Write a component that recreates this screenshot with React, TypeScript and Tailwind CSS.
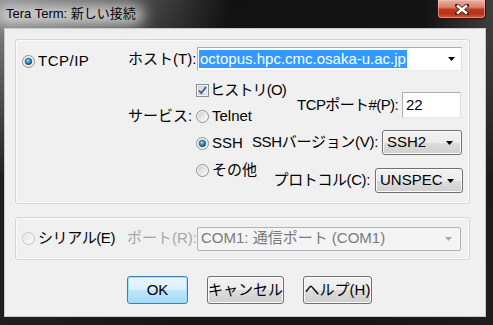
import React from "react"

const font = "font-['Liberation_Sans','Noto_Sans_CJK_JP',sans-serif]"

function Radio({ checked = false, disabled = false }: { checked?: boolean; disabled?: boolean }) {
  return (
    <svg width="13" height="13" viewBox="0 0 13 13" className="shrink-0">
      <defs>
        <linearGradient id="rbg" x1="0" y1="0" x2="1" y2="1">
          <stop offset="0" stopColor="#cfcfcf" />
          <stop offset="1" stopColor="#fbfbfb" />
        </linearGradient>
        <linearGradient id="rbgd" x1="0" y1="0" x2="1" y2="1">
          <stop offset="0" stopColor="#e2e2e2" />
          <stop offset="1" stopColor="#fbfbfb" />
        </linearGradient>
        <radialGradient id="rdot" cx="0.4" cy="0.35" r="0.7">
          <stop offset="0" stopColor="#8fdcff" />
          <stop offset="0.5" stopColor="#2f8fd0" />
          <stop offset="1" stopColor="#123d66" />
        </radialGradient>
      </defs>
      <circle cx="6.5" cy="6.5" r="6" fill="#f4f4f4" stroke={disabled ? "#c2c2c2" : "#8e8f8f"} />
      <circle cx="6.5" cy="6.5" r="4.5" fill={disabled ? "url(#rbgd)" : "url(#rbg)"} />
      {checked && <circle cx="6.5" cy="6.5" r="3.3" fill="url(#rdot)" stroke="#1b4468" strokeWidth="0.6" />}
    </svg>
  )
}

function Check() {
  return (
    <svg width="13" height="13" viewBox="0 0 13 13" className="shrink-0">
      <defs>
        <linearGradient id="cbg" x1="0" y1="0" x2="1" y2="1">
          <stop offset="0" stopColor="#d4d4d4" />
          <stop offset="1" stopColor="#fafafa" />
        </linearGradient>
      </defs>
      <rect x="0.5" y="0.5" width="12" height="12" fill="#f4f4f4" stroke="#8e8f8f" />
      <rect x="2.5" y="2.5" width="8" height="8" fill="url(#cbg)" stroke="#c0c0c0" strokeWidth="0.6" />
      <path d="M3 6.5 L5.3 9 L10 3" fill="none" stroke="#3c55a0" strokeWidth="1.8" />
    </svg>
  )
}

function Arrow({ color = "#000" }: { color?: string }) {
  return (
    <svg width="7" height="4" viewBox="0 0 7 4" className="shrink-0">
      <path d="M0 0 H7 L3.5 4 Z" fill={color} />
    </svg>
  )
}

function Select({ value, className }: { value: string; className: string }) {
  return (
    <div
      className={`flex items-center justify-between rounded-[3px] border border-[#707070] bg-[linear-gradient(#f2f2f2_0%,#ebebeb_50%,#dddddd_51%,#cfcfcf_100%)] pl-[4px] pr-[8px] text-[15px] text-black shadow-[inset_0_0_0_1px_#fcfcfc] ${className}`}
    >
      <span>{value}</span>
      <Arrow />
    </div>
  )
}

function Button({ label, primary = false, className }: { label: string; primary?: boolean; className: string }) {
  return (
    <div
      className={`flex h-[28px] items-center justify-center rounded-[3px] border text-[15px] text-black ${
        primary
          ? "border-[#3c7fb1] bg-[linear-gradient(#eaf6fd_0%,#d9f0fc_50%,#bee6fd_51%,#a7d9f5_100%)] shadow-[inset_0_0_0_1px_#9fe0fb]"
          : "border-[#707070] bg-[linear-gradient(#f2f2f2_0%,#ebebeb_50%,#dddddd_51%,#cfcfcf_100%)] shadow-[inset_0_0_0_1px_#fcfcfc]"
      } ${className}`}
    >
      {label}
    </div>
  )
}

export default function App() {
  return (
    <div
      className={`relative flex h-[325px] w-[493px] flex-col overflow-hidden bg-[linear-gradient(180deg,rgba(22,22,22,0)_0%,rgba(22,22,22,0.92)_55%),linear-gradient(100deg,#8e8e8e_0%,#5a5a5a_22%,#121212_42%,#141414_78%,#4a4a4a_92%,#6a6a6a_100%)] ${font}`}
    >
      {/* title bar */}
      <div className="relative flex h-[28px] shrink-0 items-start">
        <div className="absolute left-[-4px] top-[5px] h-[20px] w-[148px] rounded-full bg-[#dedede] opacity-85 blur-[7px]" />
        <span className="relative pl-[6px] pt-[6px] text-[13px] leading-[16px] text-black">Tera Term: 新しい接続</span>
        <div className="ml-auto mr-[7px] flex h-[19px] w-[49px] items-center justify-center rounded-b-[4px] border border-t-0 border-[#3d0d06] bg-[linear-gradient(#eab0a2_0%,#d9806b_40%,#c0391f_52%,#b53219_75%,#d05a3e_100%)] shadow-[inset_0_0_0_1px_rgba(255,200,190,0.5)]">
          <svg width="14" height="11" viewBox="0 0 14 11">
            <path d="M2 1.5 L12 9.5 M12 1.5 L2 9.5" stroke="#4a1a12" strokeWidth="4" strokeLinecap="square" />
            <path d="M2 1.5 L12 9.5 M12 1.5 L2 9.5" stroke="#ffffff" strokeWidth="2.4" />
          </svg>
        </div>
      </div>

      {/* client area */}
      <div className="ml-[4px] h-[289px] w-[482px] border border-[#c9c9c9] bg-[#f0f0f0]">
        {/* TCP/IP group */}
        <div className="ml-[10px] mt-[10px] flex h-[165px] w-[455px] rounded-[3px] border border-[#d5d5d5] shadow-[inset_0_0_0_1px_#fbfbfb]">
          <div className="w-[112px] shrink-0 pl-[6px] pt-[12px]">
            <div className="flex h-[18px] items-center gap-[3px] text-[15px]">
              <Radio checked />
              <span className="tracking-[0.5px]">TCP/IP</span>
            </div>
          </div>

          <div className="flex w-[335px] flex-col pt-[7px]">
            <div className="flex h-[24px] items-center">
              <span className="w-[69px] text-[15px]">ホスト(T):</span>
              <div className="flex h-[24px] w-[265px] items-center justify-between border border-[#abadb3] border-b-[#e3e9ef] border-r-[#dbdfe6] bg-white pl-[1px] pr-[6px]">
                <span className="bg-[#3399ff] px-[1px] text-[15px] leading-[18px] text-white">octopus.hpc.cmc.osaka-u.ac.jp</span>
                <Arrow />
              </div>
            </div>

            <div className="flex items-start">
              <div className="flex w-[110px] shrink-0 flex-col">
                <div className="ml-[68px] mt-[10px] flex h-[18px] items-center gap-[1px] whitespace-nowrap text-[15px]">
                  <Check />
                  <span className="tracking-[-0.8px]">ヒストリ(O)</span>
                </div>
                <div className="mt-[4px] flex">
                  <span className="flex h-[27px] w-[68px] shrink-0 items-center text-[15px]">サービス:</span>
                  <div className="flex flex-col">
                    <div className="flex h-[27px] items-center gap-[3px] text-[15px]">
                      <Radio />
                      <span>Telnet</span>
                    </div>
                    <div className="flex h-[27px] items-center gap-[3px] text-[15px]">
                      <Radio checked />
                      <span>SSH</span>
                    </div>
                    <div className="flex h-[27px] items-center gap-[3px] whitespace-nowrap text-[15px]">
                      <Radio />
                      <span>その他</span>
                    </div>
                  </div>
                </div>
              </div>

              <div className="ml-auto mt-[21px] flex flex-col items-end">
                <div className="mr-[2px] flex h-[26px] items-center gap-[4px] text-[15px]">
                  <span className="whitespace-nowrap tracking-[-0.6px]">TCPポート#(P):</span>
                  <div className="flex h-[26px] w-[59px] items-center border border-[#abadb3] border-b-[#e3e9ef] border-r-[#dbdfe6] bg-white pl-[3px]">
                    22
                  </div>
                </div>
                <div className="mr-[1px] mt-[12px] flex items-center gap-[4px] text-[15px]">
                  <span className="whitespace-nowrap tracking-[-0.3px]">SSHバージョン(V):</span>
                  <Select value="SSH2" className="h-[25px] w-[80px]" />
                </div>
                <div className="mt-[13px] flex items-center gap-[5px] text-[15px]">
                  <span className="whitespace-nowrap tracking-[-0.4px]">プロトコル(C):</span>
                  <Select value="UNSPEC" className="h-[25px] w-[88px]" />
                </div>
              </div>
            </div>
          </div>
        </div>

        {/* serial group */}
        <div className="ml-[10px] mt-[13px] flex h-[43px] w-[455px] items-center rounded-[3px] border border-[#d5d5d5] text-[15px] shadow-[inset_0_0_0_1px_#fbfbfb]">
          <div className="flex w-[111px] shrink-0 items-center gap-[3px] pl-[6px]">
            <Radio disabled />
            <span className="whitespace-nowrap tracking-[-0.4px]">シリアル(E)</span>
          </div>
          <span className="w-[70px] shrink-0 text-[#a6a6a6]">ポート(R):</span>
          <div className="flex h-[24px] w-[264px] items-center justify-between rounded-[2px] border border-[#adb2b5] bg-[#f4f4f4] pl-[3px] pr-[8px] text-[#7a7a7a]">
            <span>COM1: 通信ポート (COM1)</span>
            <Arrow color="#a8a8a8" />
          </div>
        </div>

        {/* buttons */}
        <div className="mt-[16px] flex gap-[19px] pl-[122px]">
          <Button label="OK" primary className="w-[61px]" />
          <Button label="キャンセル" className="w-[77px]" />
          <Button label="ヘルプ(H)" className="w-[69px]" />
        </div>
      </div>
    </div>
  )
}
